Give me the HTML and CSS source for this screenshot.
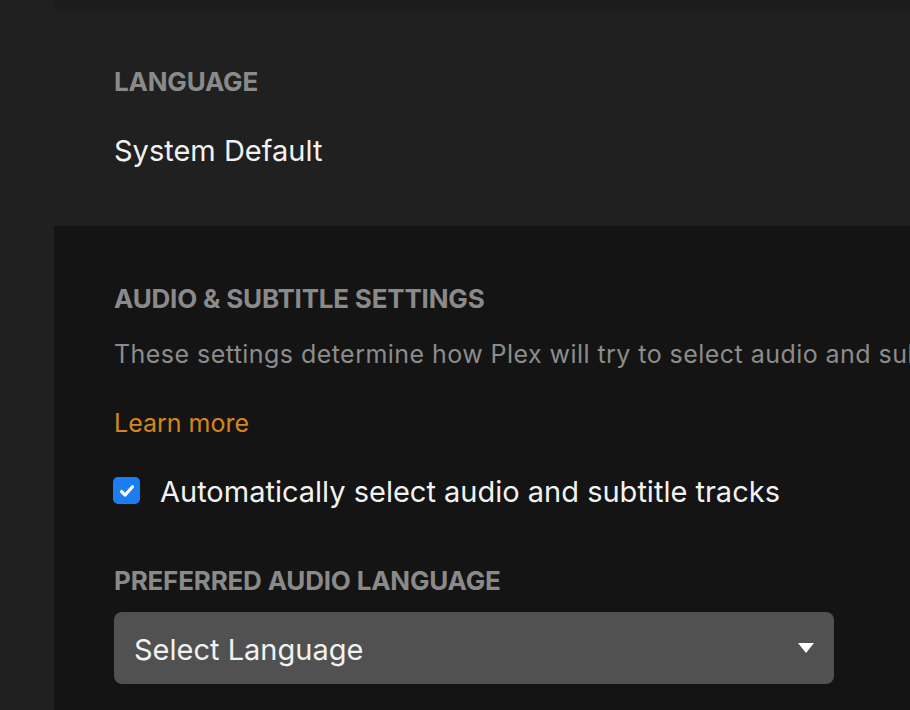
FILE: index.html
```html
<!DOCTYPE html>
<html>
<head>
<meta charset="utf-8">
<link rel="stylesheet" href="styles.css">
</head>
<body>
<div class="top-strip"></div>
<section class="lang-section">
  <h2 class="label">Language</h2>
  <div class="value">System Default</div>
</section>
<section class="panel">
  <h2 class="label">Audio &amp; Subtitle Settings</h2>
  <p class="desc">These settings determine how Plex will try to select audio and subtitle tracks for the content you play.</p>
  <a class="link" href="#">Learn more</a>
  <label class="check-row">
    <span class="checkbox">
      <svg width="18" height="18" viewBox="0 0 18 18"><path d="M3.5 9.5 L7.2 13 L14.5 4.8" fill="none" stroke="#fff" stroke-width="3.2" stroke-linecap="round" stroke-linejoin="round"/></svg>
    </span>
    <span class="check-text">Automatically select audio and subtitle tracks</span>
  </label>
  <h2 class="label pref">Preferred Audio Language</h2>
  <div class="select">
    <span class="select-text">Select Language</span>
    <svg class="caret" width="16" height="11" viewBox="0 0 16 11"><path d="M0 0 H16 L8 10 Z" fill="#fff"/></svg>
  </div>
</section>
</body>
</html>
```
FILE: styles.css
```css
html, body {
  margin: 0;
  padding: 0;
  background: #202020;
  overflow: hidden;
  width: 910px;
  height: 710px;
  font-family: Inter, "Noto Sans", sans-serif;
}
.top-strip {
  margin-left: 54px;
  height: 11px;
  background: #1c1c1c;
}
.lang-section {
  padding: 56px 0 0 114px;
  height: 215px;
  box-sizing: border-box;
}
.label {
  margin: 0;
  font-size: 26px;
  font-weight: 700;
  text-transform: uppercase;
  color: #8a8a8a;
  line-height: 30px;
  letter-spacing: -0.2px;
}
.value {
  margin-top: 37px;
  font-size: 29px;
  color: #f2f2f2;
  line-height: 34px;
}
.panel {
  margin-left: 54px;
  background: #141414;
  padding: 58px 0 0 60px;
  width: 856px;
  height: 484px;
  box-sizing: border-box;
  overflow: hidden;
}
.desc {
  margin: 25px 0 0;
  font-size: 25px;
  letter-spacing: 0.45px;
  color: #8c8c8c;
  white-space: nowrap;
  line-height: 30px;
}
.link {
  display: block;
  margin-top: 39px;
  font-size: 25px;
  color: #d4861e;
  text-decoration: none;
  line-height: 30px;
}
.check-row {
  display: flex;
  align-items: flex-start;
  gap: 20px;
  margin-top: 37px;
  margin-left: -1px;
}
.checkbox {
  margin-top: 2px;
  width: 27px;
  height: 27px;
  border-radius: 5px;
  background: #1a7ef2;
  display: flex;
  align-items: center;
  justify-content: center;
}
.check-text {
  font-size: 29px;
  color: #f2f2f2;
  line-height: 34px;
}
.pref {
  margin-top: 57px;
}
.select {
  margin-top: 16px;
  width: 720px;
  height: 72px;
  box-sizing: border-box;
  background: #515151;
  border-radius: 8px;
  display: flex;
  align-items: center;
  justify-content: space-between;
  padding: 2px 20px 0 20px;
  font-size: 29px;
  color: #f2f2f2;
}
.caret {
  margin-top: -2px;
}
```
